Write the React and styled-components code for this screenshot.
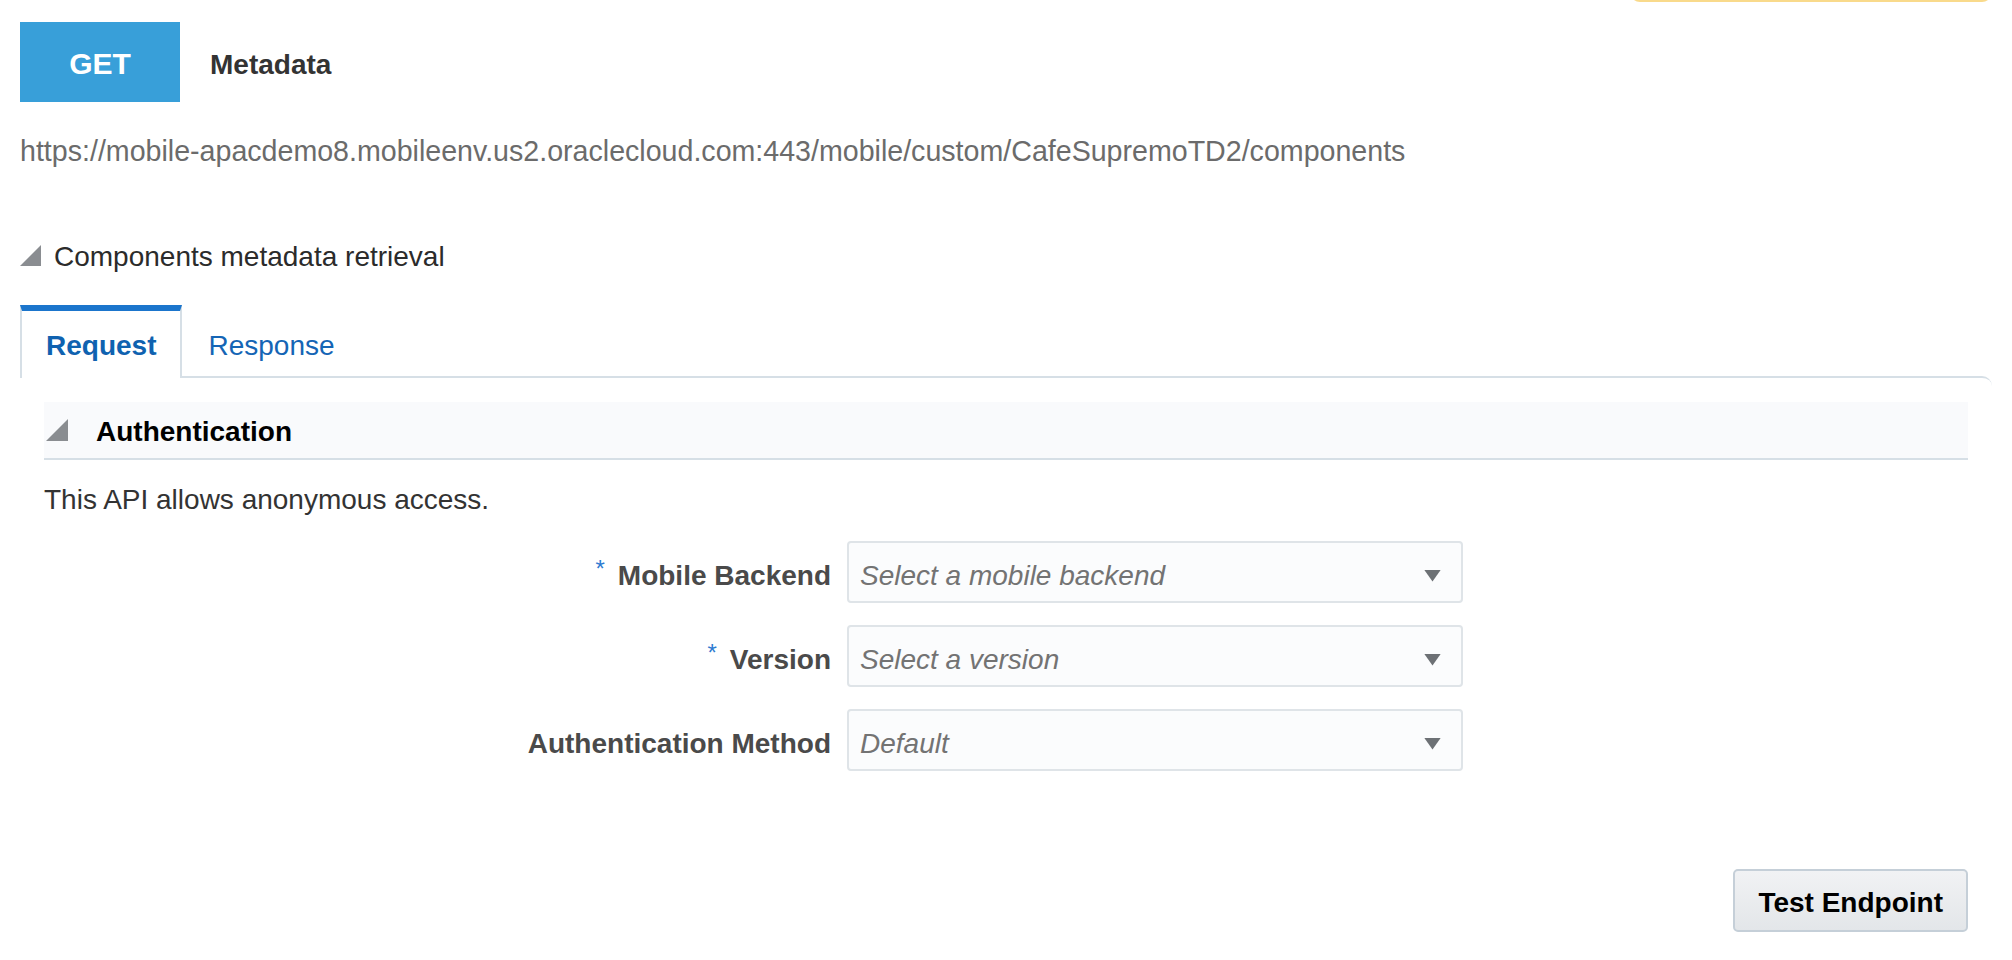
import React from 'react';
import styled, { createGlobalStyle, css } from 'styled-components';

const FONT = '"Liberation Sans", Arial, Helvetica, sans-serif';
const BORDER = '#d6dfe6';

const GlobalStyle = createGlobalStyle`
  html, body {
    margin: 0;
    padding: 0;
    background: #ffffff;
  }
  body {
    font-family: ${FONT};
    color: #333333;
  }
`;

const Page = styled.div`
  position: relative;
  padding: 22px 20px 40px 20px;
  font-family: ${FONT};
`;

const Toast = styled.div`
  position: absolute;
  top: -30px;
  right: 20px;
  width: 362px;
  height: 32px;
  border-radius: 10px;
  background: #f9da8b;
`;

const Header = styled.div`
  display: flex;
  align-items: center;
  height: 80px;
`;

const MethodBadge = styled.div`
  display: flex;
  align-items: center;
  justify-content: center;
  box-sizing: border-box;
  width: 160px;
  height: 80px;
  padding-top: 3px;
  background: #389fd9;
  color: #ffffff;
  font-size: 30px;
  font-weight: 700;
`;

const Title = styled.div`
  margin-left: 30px;
  padding-top: 5px;
  font-size: 28px;
  font-weight: 700;
  color: #333333;
`;

const Url = styled.div`
  margin-top: 33px;
  font-size: 28.6px;
  line-height: 32px;
  color: #6b6b6b;
`;

const Triangle = styled.span`
  display: inline-block;
  flex: none;
  width: ${(props) => props.size}px;
  height: ${(props) => props.size}px;
  background: #8a8d91;
  clip-path: polygon(100% 0, 100% 100%, 0 100%);
`;

const SectionToggle = styled.div`
  display: flex;
  align-items: center;
  gap: 13px;
  margin-top: 71px;
`;

const SectionTitle = styled.span`
  padding-top: 3px;
  font-size: 28px;
  line-height: 32px;
  color: #2b2b2b;
`;

const Tabs = styled.div`
  display: flex;
  margin-top: 32px;
`;

const Tab = styled.div`
  position: relative;
  z-index: 1;
  padding: 19px 24px 16px 24px;
  font-size: 28px;
  line-height: 32px;
  border-top: 6px solid transparent;
  border-left: 2px solid transparent;
  border-right: 2px solid transparent;
  color: #1565b5;
  background: transparent;

  ${(props) =>
    props.active &&
    css`
      border-top-color: #1b75cc;
      border-left-color: ${BORDER};
      border-right-color: ${BORDER};
      background: #ffffff;
      color: #0f62b0;
      font-weight: 700;
    `}
`;

const Panel = styled.div`
  margin-top: -2px;
  padding: 24px 24px 0 24px;
  border-top: 2px solid ${BORDER};
  border-top-right-radius: 10px;
`;

const SubHeader = styled.div`
  display: flex;
  align-items: center;
  gap: 28px;
  padding: 12px 0 12px 2px;
  background: #f9fafc;
  border-bottom: 2px solid ${BORDER};
`;

const SubTitle = styled.span`
  padding-top: 2px;
  margin-bottom: -2px;
  font-size: 28px;
  line-height: 32px;
  font-weight: 700;
  color: #000000;
`;

const Note = styled.div`
  margin-top: 24px;
  font-size: 28px;
  line-height: 32px;
  color: #333333;
`;

const Form = styled.div`
  display: grid;
  grid-template-columns: 787px 616px;
  column-gap: 16px;
  row-gap: 22px;
  margin-top: 25px;
`;

const Label = styled.label`
  align-self: center;
  padding-top: 8px;
  text-align: right;
  font-size: 28px;
  line-height: 32px;
  font-weight: 700;
  color: #4a4a4a;
`;

const Required = styled.span`
  position: relative;
  top: -8px;
  margin-right: 13px;
  font-size: 24px;
  font-weight: 400;
  color: #2e7bd1;
`;

const SelectBox = styled.div`
  display: flex;
  align-items: center;
  justify-content: space-between;
  box-sizing: border-box;
  height: 62px;
  padding: 7px 20px 0 11px;
  border: 2px solid #dfe4e8;
  border-radius: 4px;
  background: #fbfcfd;
`;

const Placeholder = styled.span`
  font-size: 28px;
  font-style: italic;
  color: #737373;
`;

const Arrow = styled.span`
  width: 17px;
  height: 12px;
  background: #6d7175;
  clip-path: polygon(0 0, 100% 0, 50% 100%);
`;

const Actions = styled.div`
  display: flex;
  justify-content: flex-end;
  margin-top: 98px;
`;

const Button = styled.button`
  box-sizing: border-box;
  height: 63px;
  padding: 5px 23px 0 23px;
  border: 2px solid #c5cfd8;
  border-radius: 5px;
  background: linear-gradient(#f1f2f4, #e3e6e9);
  font-family: ${FONT};
  font-size: 28px;
  font-weight: 700;
  color: #000000;
`;

const fields = [
  { label: 'Mobile Backend', placeholder: 'Select a mobile backend', required: true },
  { label: 'Version', placeholder: 'Select a version', required: true },
  { label: 'Authentication Method', placeholder: 'Default', required: false }
];

export default function App() {
  return (
    <>
      <GlobalStyle />
      <Page>
        <Toast />
        <Header>
          <MethodBadge>GET</MethodBadge>
          <Title>Metadata</Title>
        </Header>

        <Url>
          https://mobile-apacdemo8.mobileenv.us2.oraclecloud.com:443/mobile/custom/CafeSupremoTD2/components
        </Url>

        <SectionToggle>
          <Triangle size={21} />
          <SectionTitle>Components metadata retrieval</SectionTitle>
        </SectionToggle>

        <Tabs>
          <Tab active>Request</Tab>
          <Tab>Response</Tab>
        </Tabs>

        <Panel>
          <SubHeader>
            <Triangle size={22} />
            <SubTitle>Authentication</SubTitle>
          </SubHeader>

          <Note>This API allows anonymous access.</Note>

          <Form>
            {fields.map(({ label, placeholder, required }) => (
              <React.Fragment key={label}>
                <Label>
                  {required && <Required>*</Required>}
                  {label}
                </Label>
                <SelectBox>
                  <Placeholder>{placeholder}</Placeholder>
                  <Arrow />
                </SelectBox>
              </React.Fragment>
            ))}
          </Form>

          <Actions>
            <Button>Test Endpoint</Button>
          </Actions>
        </Panel>
      </Page>
    </>
  );
}
